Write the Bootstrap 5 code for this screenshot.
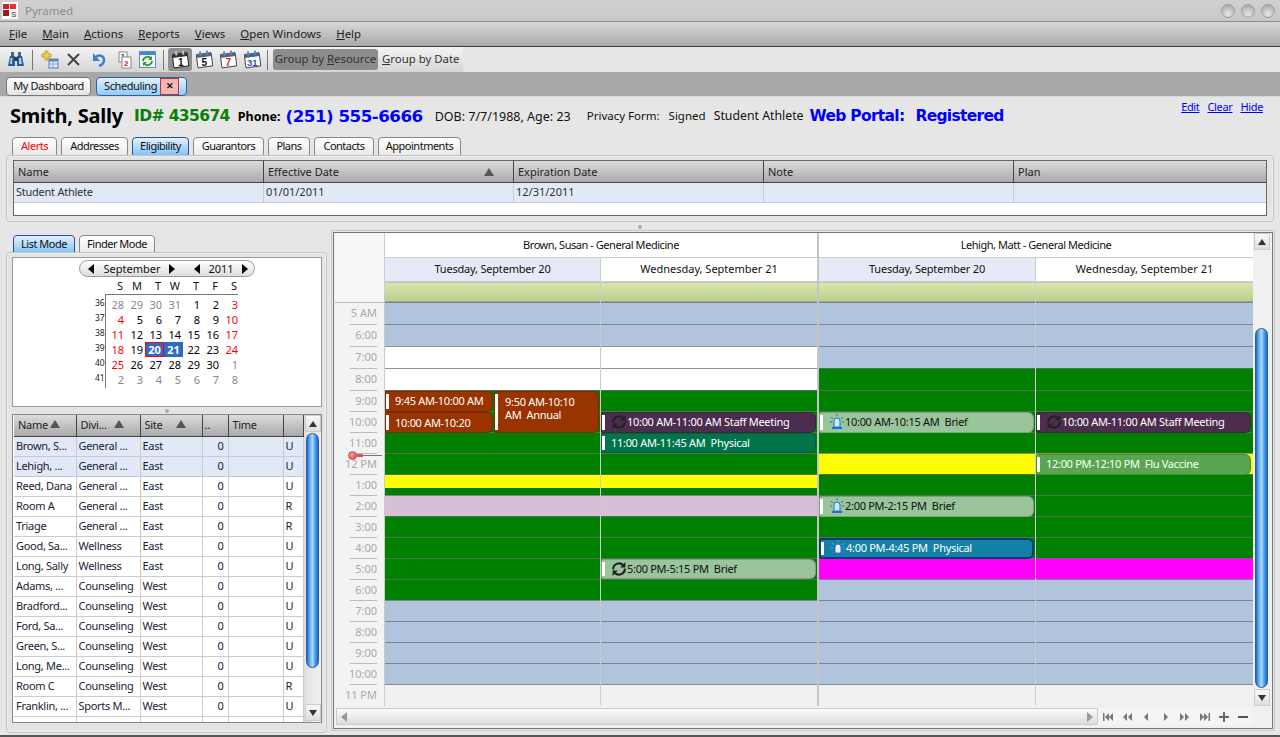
<!DOCTYPE html>
<html lang="en">
<head>
<meta charset="utf-8">
<title>Pyramed</title>
<link href="https://cdn.jsdelivr.net/npm/bootstrap@5.3.0/dist/css/bootstrap.min.css" rel="stylesheet">
<style>
html,body{height:737px;overflow:hidden;background:#e6e6e6}
body{font-family:"Noto Sans","Liberation Sans",sans-serif;font-size:11px;line-height:1.2;color:#111}
.win{height:737px;width:1280px;border-bottom:2px solid #555}
.ttl{height:22px;flex:none;background:linear-gradient(#cfcfcf,#c9c9c9);border-bottom:1px solid #8b8b8b;padding-left:2px}
.ttl-name{color:#8c8c8c;font-size:11.5px;margin-left:7px}
.orb{width:14px;height:14px;border-radius:50%;background:radial-gradient(circle at 50% 75%,#e8e8e8,#bdbdbd 60%,#999);border:1px solid #a0a0a0}
.orbs{gap:6px;padding-right:5px}
.mnu{height:25px;flex:none;background:linear-gradient(#d8d8d8,#a9a9a9);border-bottom:1px solid #3c3c3c;padding-left:9px;gap:15px;font-size:11.4px;color:#222}
.tlb{height:25px;flex:none;background:#e6e6e6}
.tlb-in{width:463px;height:25px;background:linear-gradient(#f3f3f3,#d6d6d6);padding-left:8px;font-size:11.4px;color:#333;white-space:nowrap}
.tb-sep{width:1px;height:20px;background:#777}
.sa{margin-left:8px}.sb{margin-left:8px}.sc{margin-left:7px}.sd{margin-left:10px}.se{margin-left:12px}.sf{margin-left:7px}.sg{margin-left:3px}.sh{margin-left:4px}
.tb-i{width:24px;height:23px;display:flex;align-items:center;justify-content:center}
.tb-on{background:#8f8f8f;border-radius:3px;width:24px}
.grp-on{background:#8c8c8c;border-radius:3px;height:21px;width:105px;display:flex;align-items:center;justify-content:center;margin-left:5px;padding-bottom:2px}
.grp-off{margin-left:4px;width:76px;text-align:center;padding-bottom:2px}
.tbs{height:24px;flex:none;background:#a9a9a9;padding:5px 0 0 6px;gap:5px}
.tb-tab{height:19px;border:1px solid #777;border-radius:4px;background:linear-gradient(#fff,#e4e4e4);padding:0 0 2px;width:85px;display:flex;align-items:center;justify-content:center;color:#111;letter-spacing:-.4px}
.tb-act{background:linear-gradient(#e3f2ff,#8fcbfb);border-color:#2f5fa8;padding:0 0 0 7px;width:91px;justify-content:space-between}
.tb-act>span:first-child{padding-bottom:2px}
.tb-x{width:19px;height:17px;background:#f5b5b5;border:1px solid #b33;color:#111;font-weight:700;font-size:9px;display:flex;align-items:center;justify-content:center;margin-right:7px}
.ph{height:41px;flex:none;padding:0 0 2px 10px;position:relative;white-space:nowrap;border-top:1px solid #d8d8d8}
.ph-n{font-size:20px;font-weight:700;color:#000;letter-spacing:-.2px}
.ph-id{font-size:15.5px;font-weight:700;color:#088008;margin-left:11px;font-family:"DejaVu Sans",sans-serif;letter-spacing:-.6px}
.ph-pl{font-size:12.5px;font-weight:700;color:#000;margin-left:8px}
.ph-pn{font-size:16.7px;font-weight:700;color:#00f;margin-left:5px;font-family:"DejaVu Sans",sans-serif;letter-spacing:-.5px}
.ph-t{font-size:12.5px;color:#111;margin-left:12px}
.ph-s{font-size:11.5px;color:#111}
.ph-s1{margin-left:16px}.ph-s2{margin-left:9px}.ph-s3{margin-left:8px;font-size:12.3px}
.ph-w{font-size:15.5px;font-weight:700;color:#00f;font-family:"DejaVu Sans",sans-serif;letter-spacing:-.7px;margin-left:6px}
.ph-w2{margin-left:11px}
.ph-l{position:absolute;right:17px;top:3px;gap:8px}
.ph-l a{color:#00f;font-size:11px;letter-spacing:-.35px}
.sub{padding-left:12px;gap:4px;height:20px;flex:none}
.sbt{height:20px;border:1px solid #888;border-radius:4px 4px 3px 3px;background:linear-gradient(#fff,#e8e8e8);display:flex;align-items:center;justify-content:center;color:#111;padding-bottom:2px;letter-spacing:-.5px}
.sbt-a{background:linear-gradient(#e3f2ff,#7cc0f8);border-color:#2a4f9a}
.sbt-r{color:#f00}
.sub .sbt:nth-child(1){width:45px}.sub .sbt:nth-child(2){width:67px}.sub .sbt:nth-child(3){width:57px}.sub .sbt:nth-child(4){width:71px}.sub .sbt:nth-child(5){width:42px}.sub .sbt:nth-child(6){width:60px}.sub .sbt:nth-child(7){width:83px}
.ltabs .sbt:nth-child(1){width:62px}.ltabs .sbt:nth-child(2){width:76px}
.box{border:1px solid #c4c4c4;border-radius:4px;background:#e4e4e4;box-shadow:inset 0 0 0 1px #eee}
.elig{margin:-2px 6px 0;height:67px;flex:none;padding:4px 6px}
.elig-t{background:#fff;border:1px solid #666;height:56px}
.hd{background:linear-gradient(#dcdcdc,#a9a9a9);border-bottom:1px solid #444;height:22px;color:#222}
.hd>div{border-right:1px solid #444;padding:0 4px;display:flex;align-items:center;justify-content:space-between;width:250px;flex:none}
.hd>div:last-child{border-right:0;flex:1 1 0}
.ero{height:20px;background:#e1e8f6;border-bottom:1px solid #c3cbdc}
.ero>div{width:250px;flex:none;border-right:1px solid #c3cbdc;padding:0 2px 1px;display:flex;align-items:center;color:#333}
.ero>div:first-child{letter-spacing:-.25px}
.ero>div:last-child{border-right:0;flex:1 1 0}
.tri{width:0;height:0;border-left:5px solid transparent;border-right:5px solid transparent;border-bottom:8px solid #555;display:inline-block}
.tri-e{margin-right:15px}
.spl{height:10px;flex:none;display:flex;align-items:center;justify-content:center}
.spl i{width:4px;height:4px;border-radius:50%;background:#aaa;display:block}
.spl-s{height:7px}
.lower{padding:0 6px;height:497px;flex:none;align-items:stretch}
.left{width:321px;margin-top:3px}
.ltabs{padding-left:7px;gap:4px;height:20px}
.lbox{height:481px;margin-top:-3px;padding:4px 4px 5px 5px;position:relative}
.mini{height:150px;background:#fff;border:1px solid #999;position:relative}
.pill{position:absolute;left:66px;top:2px;width:176px;height:17px;border:1px solid #999;border-radius:9px;background:linear-gradient(#fff,#ddd);display:flex;align-items:center;color:#111}
.pill b{font-weight:400}
.pa{margin-left:8px}.pb{margin-left:8px;width:60px;text-align:center}.pc{margin-left:7px}.pd{margin-left:19px}.pe{margin-left:7px;width:28px;text-align:center}.pf{margin-left:7px}
.tl{width:0;height:0;border-top:5px solid transparent;border-bottom:5px solid transparent;border-right:6px solid #000}
.tr{width:0;height:0;border-top:5px solid transparent;border-bottom:5px solid transparent;border-left:6px solid #000}
.mg{position:absolute;left:82px;top:21px;display:grid;grid-template-columns:10px repeat(7,19px);grid-template-rows:18px repeat(6,15px);line-height:15px;text-align:right}
.mg::before{content:"";position:absolute;left:10px;top:15px;width:133px;height:94px;border-left:1px solid #777;border-top:1px solid #777}
.mg>.wd{height:18px;padding-right:1px;color:#111;line-height:14px}
.mg>span{color:#000}
.mg .wn{font-size:8.5px;color:#222;padding-right:1px;line-height:11px}
.mg .g{color:#888}.mg .r{color:#f00}
.mg .hl{background:#316ac5;color:#fff;font-weight:700;text-align:center;margin:0 -2px 0 2px;position:relative}
.mg .hr{outline:1px solid #f00;outline-offset:-1px;z-index:1}
.ltbl-w{height:309px;background:#fff;border:1px solid #888;position:relative;overflow:hidden;padding:0 0 0 1px}
table.rt{table-layout:fixed;width:289px;margin:0;border-collapse:collapse;color:#1a1a33;--bs-table-bg:transparent;letter-spacing:-.3px}
table.rt th,table.rt td{padding:0 2px;height:20px;border:0;border-right:1px solid #ccc;border-bottom:1px solid #ccc;overflow:hidden;white-space:nowrap;vertical-align:middle;font-weight:400;background:transparent;box-shadow:none}
table.rt thead th{height:21px;background:linear-gradient(#dcdcdc,#a9a9a9);border-right:1px solid #444;border-bottom:1px solid #444;color:#222;padding-bottom:2px}
table.rt tr.sel td{background:#e1e8f6;border-color:#c3cbdc}
table.rt td.nm{padding-right:4px}
.c1{width:62px}.c2{width:64px}.c3{width:62px}.c4{width:26px}.c5{width:55px}.c6{width:20px}
table.rt .h-in{display:flex;justify-content:space-between;align-items:center;padding:0 14px 0 2px}
.vsb{background:linear-gradient(90deg,#e2e2e2,#f0f0f0);border-left:1px solid #ddd;position:absolute;right:0;top:0;bottom:0;width:17px}
.sb-b{background:linear-gradient(#f8f8f8,#dedede);border:1px solid #ccc;display:flex;align-items:center;justify-content:center;height:17px}
.sb-d{position:absolute;left:0;right:0;bottom:1px}
.tu{width:0;height:0;border-left:4px solid transparent;border-right:4px solid transparent;border-bottom:6px solid #333}
.td{width:0;height:0;border-left:4px solid transparent;border-right:4px solid transparent;border-top:6px solid #333}
.thumb{position:absolute;left:1px;width:13px;background:linear-gradient(90deg,#1f66c9,#6fb8f7 30%,#a9d8fb 50%,#4d9cec 75%,#1f66c9);border:1px solid #2a5a9c;border-radius:7px}
.th-l{top:18px;height:235px}
.th-r{left:2px;top:95px;height:360px}
.right{margin-left:6px;width:940px;background:#f0f0f0;border:1px solid #777;position:relative;height:497px;box-shadow:0 0 0 1px #e6e6e6,0 0 0 2px #c8c8c8}
.cal{position:absolute;left:1px;top:0;width:918px;height:473px}
.gut{width:49px;flex:none;background:#f3f3f3}
.gut-h{height:69px;background:#f6f6f6}
.gut-r{color:#aaa;text-align:right;padding:4px 7px 0 0;line-height:14px;position:relative}
.gut-r::before{content:"";position:absolute;left:15px;right:7px;top:0;height:1px;background:#bbb}
.gut-f::before{left:0;right:0}
.res{width:433px;flex:none;border-left:1px solid #ccc}
.res-b{width:436px;border-left:2px solid #c4c4c4}
.res-h{height:25px;background:#fff;border-bottom:1px solid #ccc;text-align:center;line-height:23px;color:#111;letter-spacing:-.45px}
.dc{position:relative;flex:none}
.d1{width:215px}.d2{width:217px}.d3{width:216px}.d4{width:218px}
.dc+.dc{border-left:1px solid #ccc}
.dh{height:24px;border-bottom:1px solid #ccc;text-align:center;line-height:21px;color:#111;background:#fff}
.dh-a{background:#e5eaf6;letter-spacing:-.2px}
.strp{height:20px;background:linear-gradient(#d8e6a9,#bccf90);border-bottom:1px solid #9aa77a;border-top:1px solid #c4c4c4}
.slots{position:relative}
.s{border-top:1px solid rgba(110,110,110,.75)}
.s22{height:22px}.s21{height:21px}
.bl{background:#b0c4de}.wh{background:#fff}.gr{background:green}.ye{background:#ff0}.th{background:#d8bfd8}.ma{background:#f0f}
.emp{background:#f0f0f0;border-top:1px solid #8a8a8a}
.yh{background:linear-gradient(#ff0 13px,green 13px)}
.apt{position:absolute;border-radius:2px 6px 6px 2px;border:1px solid rgba(0,0,0,.18);padding:0 0 0 9px;display:flex;align-items:center;white-space:nowrap;overflow:hidden;letter-spacing:-.3px}
.apt::before{content:"";position:absolute;left:0;top:2px;bottom:2px;width:3px;background:#fff}
.apt-w{display:block;line-height:13px;padding:3px 0 0 10px}
.up1{padding-bottom:2px}
.rd{background:#993300;color:#fff}.pu{background:#4d2d4f;color:#fff}.te{background:#00754a;color:#fff}.lg{background:#9ac49a;color:#111}.bu{background:#1380a8;color:#fff;border:2px solid #0f3d6b}.fl{background:#5aa650;color:#fff}
.apt svg{flex:none}
.now{position:absolute;left:13px;top:222px;width:34px;height:1px;background:#777}
.now i{position:absolute;left:0;top:-4px;width:9px;height:9px;border-radius:50%;background:radial-gradient(circle at 40% 35%,#f0a0a0,#cc4444);border:1px solid #c55;display:block}
.now b{position:absolute;left:8px;top:-1px;width:7px;height:3px;background:#d55;display:block}
.v2{position:absolute;right:1px;top:0;bottom:1px;width:18px}
.sb-u2{height:17px;margin:0 1px}
.sb-d2{position:absolute;left:1px;right:1px;bottom:21px}
.hsb{position:absolute;left:2px;top:475px;width:917px;height:17px;display:flex;background:#f4f4f4}
.hsb-t{width:762px;height:17px;flex:none;background:linear-gradient(#fafafa,#dcdcdc);border:1px solid #ccc;display:flex;justify-content:space-between;align-items:center;padding:0 4px}
.tl-g{border-right-color:#999}.tr-g{border-left-color:#999}
.nav-i{display:flex;align-items:center}
.nav-i span{width:19.4px;display:flex;justify-content:center}
.nav-i svg{display:block}
</style>
</head>
<body>
<div class="win d-flex flex-column">
  <div class="ttl d-flex align-items-center justify-content-between">
    <div class="d-flex align-items-center">
      <svg width="16" height="17" viewBox="0 0 16 17"><rect width="16" height="17" fill="#fff"/><rect x="1" y="2" width="6" height="5" fill="#c8202c"/><rect x="8" y="2" width="6" height="5" fill="#e0303c"/><rect x="1" y="8" width="6" height="6" fill="#a01822"/><rect x="8" y="8" width="7" height="8" fill="#eee"/><text x="9.500" y="15" font-size="7" font-family="Liberation Sans" fill="#333">S</text></svg>
      <span class="ttl-name">Pyramed</span>
    </div>
    <div class="orbs d-flex"><div class="orb"></div><div class="orb"></div><div class="orb"></div></div>
  </div>
  <div class="mnu d-flex align-items-center">
    <span><u>F</u>ile</span><span><u>M</u>ain</span><span><u>A</u>ctions</span><span><u>R</u>eports</span><span><u>V</u>iews</span><span><u>O</u>pen Windows</span><span><u>H</u>elp</span>
  </div>
  <div class="tlb">
    <div class="tlb-in d-flex align-items-center">
      <svg width="16" height="17" viewBox="0 0 16 17"><path d="M3 1h3v4H3zM10 1h3v4h-3z" fill="#3f6595"/><path d="M2 5h5v10H0zM9 5h5l2 10H9z" fill="#2d5890"/><path d="M6.500 6h3v4h-3z" fill="#1d3d6a"/><path d="M2.500 7h2L4 13H2zM11 7h2l1 6h-3z" fill="#a8c8ee"/></svg>
      <div class="tb-sep sa"></div>
      <svg class="sb" width="18" height="20" viewBox="0 0 18 20"><path d="M4 1h3v3h3v3H7v3H4V7H1V4h3z" fill="#f2cf4a" stroke="#a88a20" stroke-width=".7"/><rect x="8" y="9" width="9" height="9" fill="#dfe9f7" stroke="#5a7fb0"/><rect x="8" y="9" width="9" height="2.500" fill="#5a86c0"/><path d="M8 14h9M12 11v7" stroke="#7a9ac4" stroke-width=".8"/></svg>
      <svg class="sc" width="15" height="15" viewBox="0 0 15 15"><path d="M2 2l11 11M13 2L2 13" stroke="#444" stroke-width="2"/></svg>
      <svg class="sd" width="15" height="15" viewBox="0 0 15 15"><path d="M4 6c3-4 9-3 9 2 0 3-2 5-5 6" fill="none" stroke="#3b7fd0" stroke-width="2.500"/><path d="M2 1v8h7z" fill="#3b7fd0"/></svg>
      <svg class="se" width="14" height="18" viewBox="0 0 14 18"><rect x="1" y="1" width="8" height="10" fill="#fff" stroke="#888"/><text x="3" y="8" font-size="7" font-weight="700" font-family="Liberation Sans" fill="#222">1</text><rect x="4" y="6" width="9" height="11" fill="#fff" stroke="#888"/><text x="6" y="15" font-size="8" font-weight="700" font-family="Liberation Sans" fill="#c22">2</text></svg>
      <svg class="sf" width="17" height="17" viewBox="0 0 17 17"><rect x=".5" y=".5" width="16" height="16" fill="#f4f7fb" stroke="#6a8ab8"/><rect x="1" y="1" width="15" height="3" fill="#4a86d0"/><path d="M4 10a4.500 4.500 0 0 1 8-2.500M13 10a4.500 4.500 0 0 1-8 2.500" fill="none" stroke="#2f9a2f" stroke-width="1.800"/><path d="M13 5v4H9zM4 15v-4h4z" fill="#2f9a2f"/></svg>
      <div class="tb-sep sf"></div>
      <div class="tb-i tb-on sh"><svg width="19" height="19" viewBox="0 0 19 19"><g transform="rotate(-7 9 10)"><rect x="2" y="4" width="15" height="13" rx="1" fill="#fff" stroke="#222"/><rect x="2" y="3" width="15" height="4" fill="#333"/><path d="M6 1v4M13 1v4" stroke="#bcd" stroke-width="2"/></g><text x="7" y="15.500" font-size="10" font-weight="700" font-family="Liberation Sans" fill="#111">1</text></svg></div>
      <div class="tb-i"><svg width="19" height="19" viewBox="0 0 19 19"><g transform="rotate(-7 9 10)"><rect x="2" y="4" width="15" height="13" rx="1" fill="#fff" stroke="#444"/><rect x="2" y="3" width="15" height="4" fill="#55677a"/><path d="M6 1v4M13 1v4" stroke="#6a8ab8" stroke-width="2"/></g><text x="6.500" y="15.500" font-size="10" font-weight="700" font-family="Liberation Sans" fill="#111">5</text></svg></div>
      <div class="tb-i"><svg width="19" height="19" viewBox="0 0 19 19"><g transform="rotate(-7 9 10)"><rect x="2" y="4" width="15" height="13" rx="1" fill="#fff" stroke="#444"/><rect x="2" y="3" width="15" height="4" fill="#55677a"/><path d="M6 1v4M13 1v4" stroke="#6a8ab8" stroke-width="2"/></g><text x="6.500" y="15.500" font-size="10" font-weight="700" font-family="Liberation Sans" fill="#c22">7</text></svg></div>
      <div class="tb-i"><svg width="19" height="19" viewBox="0 0 19 19"><g transform="rotate(-7 9 10)"><rect x="2" y="4" width="15" height="13" rx="1" fill="#fff" stroke="#444"/><rect x="2" y="3" width="15" height="4" fill="#3f6595"/><path d="M6 1v4M13 1v4" stroke="#6a8ab8" stroke-width="2"/></g><text x="4" y="15.500" font-size="9.500" font-weight="700" font-family="Liberation Sans" fill="#2a5aa8">31</text></svg></div>
      <div class="tb-sep sg"></div>
      <div class="grp-on"><span>Group by <u>R</u>esource</span></div>
      <div class="grp-off"><u>G</u>roup by Date</div>
    </div>
  </div>
  <div class="tbs d-flex">
    <div class="tb-tab">My Dashboard</div>
    <div class="tb-tab tb-act"><span>Scheduling</span><span class="tb-x">✕</span></div>
  </div>
  <div class="ph d-flex align-items-center">
    <span class="ph-n">Smith, Sally</span>
    <span class="ph-id">ID# 435674</span>
    <span class="ph-pl">Phone:</span>
    <span class="ph-pn">(251) 555-6666</span>
    <span class="ph-t">DOB: 7/7/1988, Age: 23</span>
    <span class="ph-s ph-s1">Privacy Form:</span>
    <span class="ph-s ph-s2">Signed</span>
    <span class="ph-s ph-s3">Student Athlete</span>
    <span class="ph-w">Web Portal:</span>
    <span class="ph-w ph-w2">Registered</span>
    <div class="ph-l d-flex"><a href="#">Edit</a><a href="#">Clear</a><a href="#">Hide</a></div>
  </div>
  <div class="sub d-flex">
    <div class="sbt sbt-r">Alerts</div><div class="sbt">Addresses</div><div class="sbt sbt-a">Eligibility</div><div class="sbt">Guarantors</div><div class="sbt">Plans</div><div class="sbt">Contacts</div><div class="sbt">Appointments</div>
  </div>
  <div class="box elig">
    <div class="elig-t">
      <div class="hd d-flex"><div>Name</div><div>Effective Date<span class="tri tri-e"></span></div><div>Expiration Date</div><div>Note</div><div>Plan</div></div>
      <div class="ero d-flex"><div>Student Athlete</div><div>01/01/2011</div><div>12/31/2011</div><div></div><div></div></div>
    </div>
  </div>
  <div class="spl"><i></i></div>
  <div class="lower d-flex">
    <div class="left">
      <div class="ltabs d-flex"><div class="sbt sbt-a">List Mode</div><div class="sbt">Finder Mode</div></div>
      <div class="box lbox">
        <div class="mini">
          <div class="pill"><span class="tl pa"></span><b class="pb">September</b><span class="tr pc"></span><span class="tl pd"></span><b class="pe">2011</b><span class="tr pf"></span></div>
          <div class="mg">
            <span></span><span class="wd">S</span><span class="wd">M</span><span class="wd">T</span><span class="wd">W</span><span class="wd">T</span><span class="wd">F</span><span class="wd">S</span>
            <span class="wn">36</span><span class="g">28</span><span class="g">29</span><span class="g">30</span><span class="g">31</span><span>1</span><span>2</span><span class="r">3</span>
            <span class="wn">37</span><span class="r">4</span><span>5</span><span>6</span><span>7</span><span>8</span><span>9</span><span class="r">10</span>
            <span class="wn">38</span><span class="r">11</span><span>12</span><span>13</span><span>14</span><span>15</span><span>16</span><span class="r">17</span>
            <span class="wn">39</span><span class="r">18</span><span>19</span><span class="hl hr">20</span><span class="hl">21</span><span>22</span><span>23</span><span class="r">24</span>
            <span class="wn">40</span><span class="r">25</span><span>26</span><span>27</span><span>28</span><span>29</span><span>30</span><span class="g">1</span>
            <span class="wn">41</span><span class="g">2</span><span class="g">3</span><span class="g">4</span><span class="g">5</span><span class="g">6</span><span class="g">7</span><span class="g">8</span>
          </div>
        </div>
        <div class="spl spl-s"><i></i></div>
        <div class="ltbl-w">
          <table class="table rt">
            <colgroup><col class="c1"><col class="c2"><col class="c3"><col class="c4"><col class="c5"><col class="c6"></colgroup>
            <thead><tr><th><div class="h-in">Name<span class="tri"></span></div></th><th><div class="h-in">Divi...<span class="tri"></span></div></th><th><div class="h-in">Site<span class="tri"></span></div></th><th>..</th><th><div class="h-in">Time</div></th><th></th></tr></thead>
            <tbody>
              <tr class="sel"><td>Brown, S...</td><td>General ...</td><td>East</td><td class="text-end nm">0</td><td></td><td>U</td></tr>
              <tr class="sel"><td>Lehigh, ...</td><td>General ...</td><td>East</td><td class="text-end nm">0</td><td></td><td>U</td></tr>
              <tr><td>Reed, Dana</td><td>General ...</td><td>East</td><td class="text-end nm">0</td><td></td><td>U</td></tr>
              <tr><td>Room A</td><td>General ...</td><td>East</td><td class="text-end nm">0</td><td></td><td>R</td></tr>
              <tr><td>Triage</td><td>General ...</td><td>East</td><td class="text-end nm">0</td><td></td><td>R</td></tr>
              <tr><td>Good, Sa...</td><td>Wellness</td><td>East</td><td class="text-end nm">0</td><td></td><td>U</td></tr>
              <tr><td>Long, Sally</td><td>Wellness</td><td>East</td><td class="text-end nm">0</td><td></td><td>U</td></tr>
              <tr><td>Adams, ...</td><td>Counseling</td><td>West</td><td class="text-end nm">0</td><td></td><td>U</td></tr>
              <tr><td>Bradford...</td><td>Counseling</td><td>West</td><td class="text-end nm">0</td><td></td><td>U</td></tr>
              <tr><td>Ford, Sa...</td><td>Counseling</td><td>West</td><td class="text-end nm">0</td><td></td><td>U</td></tr>
              <tr><td>Green, S...</td><td>Counseling</td><td>West</td><td class="text-end nm">0</td><td></td><td>U</td></tr>
              <tr><td>Long, Me...</td><td>Counseling</td><td>West</td><td class="text-end nm">0</td><td></td><td>U</td></tr>
              <tr><td>Room C</td><td>Counseling</td><td>West</td><td class="text-end nm">0</td><td></td><td>R</td></tr>
              <tr><td>Franklin, ...</td><td>Sports M...</td><td>West</td><td class="text-end nm">0</td><td></td><td>U</td></tr>
              <tr><td></td><td></td><td></td><td></td><td></td><td></td></tr>
            </tbody>
          </table>
          <div class="vsb">
            <div class="sb-b"><span class="tu"></span></div>
            <div class="thumb th-l"></div>
            <div class="sb-b sb-d"><span class="td"></span></div>
          </div>
        </div>
      </div>
    </div>
    <div class="right">
      <div class="cal d-flex">
        <div class="gut">
          <div class="gut-h"></div>
          <div class="gut-r gut-f s22">5 AM</div><div class="gut-r s22">6:00</div><div class="gut-r s22">7:00</div><div class="gut-r s22">8:00</div>
          <div class="gut-r s21">9:00</div><div class="gut-r s21">10:00</div><div class="gut-r s21">11:00</div><div class="gut-r s21">12 PM</div><div class="gut-r s21">1:00</div><div class="gut-r s21">2:00</div><div class="gut-r s21">3:00</div><div class="gut-r s21">4:00</div><div class="gut-r s21">5:00</div><div class="gut-r s21">6:00</div><div class="gut-r s21">7:00</div><div class="gut-r s21">8:00</div><div class="gut-r s21">9:00</div><div class="gut-r s21">10:00</div><div class="gut-r s21">11 PM</div>
        </div>
        <div class="res">
          <div class="res-h">Brown, Susan - General Medicine</div>
          <div class="d-flex">
            <div class="dc d1">
              <div class="dh dh-a">Tuesday, September 20</div><div class="strp"></div>
              <div class="slots">
                <div class="s s22 bl"></div><div class="s s22 bl"></div><div class="s s22 wh"></div><div class="s s22 wh"></div>
                <div class="s s21 gr"></div><div class="s s21 gr"></div><div class="s s21 gr"></div><div class="s s21 gr"></div><div class="s s21 yh"></div><div class="s s21 th"></div><div class="s s21 gr"></div><div class="s s21 gr"></div><div class="s s21 gr"></div><div class="s s21 gr"></div><div class="s s21 bl"></div><div class="s s21 bl"></div><div class="s s21 bl"></div><div class="s s21 bl"></div><div class="emp s21"></div>
                <div class="apt rd up1" style="left:0;top:89px;width:108px;height:21px">9:45 AM-10:00 AM</div>
                <div class="apt rd" style="left:0;top:110px;width:108px;height:21px">10:00 AM-10:20</div>
                <div class="apt rd apt-w" style="left:109px;top:89px;width:105px;height:42px">9:50 AM-10:10<br>AM &nbsp;Annual</div>
              </div>
            </div>
            <div class="dc d2">
              <div class="dh">Wednesday, September 21</div><div class="strp"></div>
              <div class="slots">
                <div class="s s22 bl"></div><div class="s s22 bl"></div><div class="s s22 wh"></div><div class="s s22 wh"></div>
                <div class="s s21 gr"></div><div class="s s21 gr"></div><div class="s s21 gr"></div><div class="s s21 gr"></div><div class="s s21 yh"></div><div class="s s21 th"></div><div class="s s21 gr"></div><div class="s s21 gr"></div><div class="s s21 gr"></div><div class="s s21 gr"></div><div class="s s21 bl"></div><div class="s s21 bl"></div><div class="s s21 bl"></div><div class="s s21 bl"></div><div class="emp s21"></div>
                <div class="apt pu up1" style="left:0;top:110px;width:215px;height:21px"><svg width="16" height="16" viewBox="0 0 15 15"><path d="M2 8a5.500 5.500 0 0 1 9.500-4M13 7a5.500 5.500 0 0 1-9.500 4" fill="none" stroke="#222" stroke-width="2"/><path d="M13.500 1v5h-5zM1.500 14V9h5z" fill="#222"/></svg>10:00 AM-11:00 AM Staff Meeting</div>
                <div class="apt te" style="left:0;top:131px;width:215px;height:20px">11:00 AM-11:45 AM &nbsp;Physical</div>
                <div class="apt lg" style="left:0;top:257px;width:215px;height:20px"><svg width="16" height="16" viewBox="0 0 15 15"><path d="M2 8a5.500 5.500 0 0 1 9.500-4M13 7a5.500 5.500 0 0 1-9.500 4" fill="none" stroke="#222" stroke-width="2"/><path d="M13.500 1v5h-5zM1.500 14V9h5z" fill="#222"/></svg>5:00 PM-5:15 PM &nbsp;Brief</div>
              </div>
            </div>
          </div>
        </div>
        <div class="res res-b">
          <div class="res-h">Lehigh, Matt - General Medicine</div>
          <div class="d-flex">
            <div class="dc d3">
              <div class="dh dh-a">Tuesday, September 20</div><div class="strp"></div>
              <div class="slots">
                <div class="s s22 bl"></div><div class="s s22 bl"></div><div class="s s22 bl"></div><div class="s s22 gr"></div>
                <div class="s s21 gr"></div><div class="s s21 gr"></div><div class="s s21 gr"></div><div class="s s21 ye"></div><div class="s s21 gr"></div><div class="s s21 gr"></div><div class="s s21 gr"></div><div class="s s21 gr"></div><div class="s s21 ma"></div><div class="s s21 bl"></div><div class="s s21 bl"></div><div class="s s21 bl"></div><div class="s s21 bl"></div><div class="s s21 bl"></div><div class="emp s21"></div>
                <div class="apt lg up1" style="left:0;top:110px;width:215px;height:21px"><svg width="16" height="16" viewBox="0 0 16 16"><path d="M5 13V7a3 3 0 0 1 6 0v6z" fill="#c8ecff" stroke="#1a6fd8"/><rect x="3" y="13" width="10" height="2" fill="#1a6fd8"/><path d="M1 8h2M13 8h2M2 3l2 2M14 3l-2 2M8 0v2" stroke="#1a6fd8"/></svg>10:00 AM-10:15 AM &nbsp;Brief</div>
                <div class="apt lg up1" style="left:0;top:194px;width:215px;height:21px"><svg width="16" height="16" viewBox="0 0 16 16"><path d="M5 13V7a3 3 0 0 1 6 0v6z" fill="#c8ecff" stroke="#1a6fd8"/><rect x="3" y="13" width="10" height="2" fill="#1a6fd8"/><path d="M1 8h2M13 8h2M2 3l2 2M14 3l-2 2M8 0v2" stroke="#1a6fd8"/></svg>2:00 PM-2:15 PM &nbsp;Brief</div>
                <div class="apt bu up1" style="left:0;top:236px;width:215px;height:21px"><svg width="16" height="16" viewBox="0 0 16 16"><path d="M5 13V7a3 3 0 0 1 6 0v6z" fill="#e8f6ff" stroke="#1a6fd8"/><rect x="3" y="13" width="10" height="2" fill="#1a6fd8"/><path d="M1 8h2M13 8h2M2 3l2 2M14 3l-2 2M8 0v2" stroke="#5aa8e8"/></svg>4:00 PM-4:45 PM &nbsp;Physical</div>
              </div>
            </div>
            <div class="dc d4">
              <div class="dh">Wednesday, September 21</div><div class="strp"></div>
              <div class="slots">
                <div class="s s22 bl"></div><div class="s s22 bl"></div><div class="s s22 bl"></div><div class="s s22 gr"></div>
                <div class="s s21 gr"></div><div class="s s21 gr"></div><div class="s s21 gr"></div><div class="s s21 ye"></div><div class="s s21 gr"></div><div class="s s21 gr"></div><div class="s s21 gr"></div><div class="s s21 gr"></div><div class="s s21 ma"></div><div class="s s21 bl"></div><div class="s s21 bl"></div><div class="s s21 bl"></div><div class="s s21 bl"></div><div class="s s21 bl"></div><div class="emp s21"></div>
                <div class="apt pu up1" style="left:0;top:110px;width:215px;height:21px"><svg width="16" height="16" viewBox="0 0 15 15"><path d="M2 8a5.500 5.500 0 0 1 9.500-4M13 7a5.500 5.500 0 0 1-9.500 4" fill="none" stroke="#222" stroke-width="2"/><path d="M13.500 1v5h-5zM1.500 14V9h5z" fill="#222"/></svg>10:00 AM-11:00 AM Staff Meeting</div>
                <div class="apt fl up1" style="left:0;top:152px;width:215px;height:21px">12:00 PM-12:10 PM &nbsp;Flu Vaccine</div>
              </div>
            </div>
          </div>
        </div>
        <div class="now"><i></i><b></b></div>
      </div>
      <div class="v2">
        <div class="sb-b sb-u2"><span class="tu"></span></div>
        <div class="thumb th-r"></div>
        <div class="sb-b sb-d2"><span class="td"></span></div>
      </div>
      <div class="hsb">
        <div class="hsb-t"><span class="tl tl-g"></span><span class="tr tr-g"></span></div>
        <div class="nav-i">
          <span><svg width="10" height="10" viewBox="0 0 10 10" fill="#777"><rect y="1" width="1.500" height="8"/><path d="M6 1v8L2 5zM10 1v8L6 5z"/></svg></span>
          <span><svg width="10" height="10" viewBox="0 0 10 10" fill="#777"><path d="M5 1v8L1 5zM10 1v8L6 5z"/></svg></span>
          <span><svg width="6" height="10" viewBox="0 0 6 10" fill="#777"><path d="M5 1v8L1 5z"/></svg></span>
          <span><svg width="6" height="10" viewBox="0 0 6 10" fill="#777"><path d="M1 1v8l4-4z"/></svg></span>
          <span><svg width="10" height="10" viewBox="0 0 10 10" fill="#777"><path d="M0 1v8l4-4zM5 1v8l4-4z"/></svg></span>
          <span><svg width="10" height="10" viewBox="0 0 10 10" fill="#777"><path d="M0 1v8l4-4zM4 1v8l4-4z"/><rect x="8.500" y="1" width="1.500" height="8"/></svg></span>
          <span><svg width="10" height="10" viewBox="0 0 10 10" fill="#666"><path d="M4 0h2v4h4v2H6v4H4V6H0V4h4z"/></svg></span>
          <span><svg width="10" height="10" viewBox="0 0 10 10" fill="#555"><rect y="4" width="10" height="2"/></svg></span>
        </div>
      </div>
    </div>
  </div>
</div>
</body>
</html>
